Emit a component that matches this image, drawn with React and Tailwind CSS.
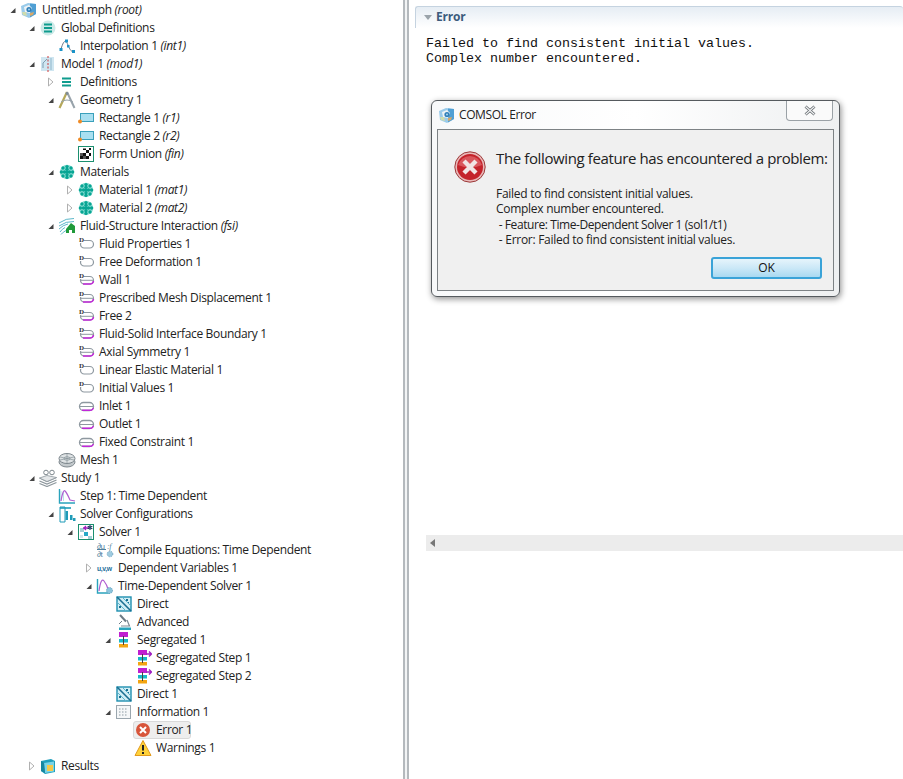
import React from "react";

const Svg = ({ children, w = 18, h = 18 }) => (
  <svg width={w} height={h} viewBox={`0 0 ${w} ${h}`} className="block shrink-0">{children}</svg>
);

const Logo = () => (
  <Svg>
    <path d="M1 5 L8 2 L16 3 L16 13 L9 17 L2 14 Z" fill="#9acbea" />
    <path d="M10 2.5 L16 3 L16 13 L10 16.5 Z" fill="#4f9fd4" />
    <path d="M4 6 L9 4 L12 7 L10 12 L5 11 Z" fill="#eef3f6" />
    <circle cx="9" cy="8.5" r="2.6" fill="#2f7fb8" />
    <circle cx="9" cy="8.5" r="1" fill="#a9d4ee" />
    <path d="M2 11 L6 11 L7 15 L3 14 Z" fill="#cfdcae" />
    <path d="M10 12 L14 11 L13 14 L10 15 Z" fill="#d8a868" />
  </Svg>
);
const GlobalDefs = () => (
  <Svg>
    <circle cx="9" cy="9" r="7.5" fill="#cdeae8" />
    <path d="M5 5.5H13M5 9H13M5 12.5H13" stroke="#0f9c8e" strokeWidth="2" />
  </Svg>
);
const Interp = () => (
  <Svg>
    <path d="M3 12 C6 2, 8 3, 10 8 S13 14, 15 15" fill="none" stroke="#6a7a88" strokeWidth="1" />
    <rect x="1.5" y="11" width="3" height="3" fill="#1a93c8" />
    <rect x="7" y="2.5" width="3" height="3" fill="#1a93c8" />
    <rect x="9" y="8" width="2.5" height="2.5" fill="#1a93c8" />
    <rect x="14" y="13" width="3" height="3" fill="#1a93c8" />
  </Svg>
);
const ModelIc = () => (
  <Svg>
    <rect x="2" y="2" width="13" height="14" fill="#cfe6f1" />
    <path d="M4 13 L4 8 L8 4" fill="none" stroke="#7f9fb2" />
    <path d="M9 1V17" stroke="#cc3a3a" strokeWidth="1" strokeDasharray="2 1.5" />
    <path d="M12 3V15" stroke="#8fb6cb" />
  </Svg>
);
const Lines = () => (
  <Svg>
    <path d="M4 5.5H13M4 9H13M4 12.5H13" stroke="#0f9c8e" strokeWidth="2" />
  </Svg>
);
const Compass = () => (
  <Svg>
    <path d="M9 1 L1.5 17" stroke="#b5a85a" strokeWidth="2.2" />
    <path d="M9 1 L16.5 17" stroke="#98a3ab" strokeWidth="2" />
    <path d="M3 11 Q9 7 15 11" stroke="#98a3ab" fill="none" />
    <circle cx="9" cy="2.5" r="1.4" fill="#7f8c96" />
  </Svg>
);
const Rect = () => (
  <Svg>
    <rect x="3.5" y="4.5" width="13" height="8" fill="#a9dff0" stroke="#3aa0bb" />
    <circle cx="3" cy="12.5" r="2" fill="#f08a24" />
  </Svg>
);
const Checker = () => (
  <Svg>
    <rect x="1.5" y="1.5" width="15" height="15" fill="#fff" stroke="#1b8f6f" />
    <path d="M3 11h3v3H3zM6 8h3v3H6zM9 5h3v3H9zM12 3h2v2h-2zM9 11h3v3H9zM12 8h2v3h-2zM6 3.5h3V5H6z" fill="#111" />
    <path d="M3 8h3v3H3zM6 11h3v3H6z" fill="#555" />
  </Svg>
);
const Material = () => (
  <Svg>
    <circle cx="9" cy="9" r="7.2" fill="#8fe0d6" />
    {[[9,3.6],[5,5],[13,5],[3.4,9],[14.6,9],[5,13],[13,13],[9,14.4],[9,9],[6.5,9],[11.5,9],[9,6.3],[9,11.7]].map(([x, y], i) => (
      <circle key={i} cx={x} cy={y} r="1.7" fill="#08a594" />
    ))}
  </Svg>
);
const Fsi = () => (
  <Svg>
    <path d="M1 6 Q8 1 16 1.5M1 9 Q8 4 16 4.5M1 12 Q5 8 10 7M2 15 Q4 12 7 10.5M3 17.5 Q5 15 8 13.5" stroke="#5cb8c9" fill="none" />
    <path d="M8 16 L8 12 L13 6 L17 9 L17 16 L14 16 L14 13 L11 13 L11 16 Z" fill="#1f9a3a" />
  </Svg>
);
const DNode = ({ m }) => (
  <Svg>
    <rect x="3.5" y="5.5" width="13" height="7.5" rx="3.7" fill="#fff" stroke="#8e98a0" strokeWidth="1.2" />
    {m ? (
      <>
        <path d="M4 9.3H16" stroke="#8e98a0" />
        <path d="M6 13H13.5A3.5 3.5 0 0 0 16.5 10" fill="none" stroke="#c028d8" strokeWidth="1.5" />
      </>
    ) : null}
    <rect x="1" y="1" width="6" height="7" fill="#fff" />
    <text x="2" y="7" fontSize="7" fontWeight="700" fontFamily="Liberation Serif, serif" fill="#333">D</text>
  </Svg>
);
const Pill = () => (
  <Svg>
    <rect x="2.5" y="5.5" width="14" height="8" rx="4" fill="#fff" stroke="#8e98a0" strokeWidth="1.3" />
    <path d="M3 9.5H16" stroke="#8e98a0" />
    <path d="M5 13.3H14A3.5 3.5 0 0 0 16.4 11" fill="none" stroke="#c028d8" strokeWidth="1.4" />
  </Svg>
);
const Mesh = () => (
  <Svg>
    <ellipse cx="9" cy="11" rx="8" ry="5" fill="#c3c9cc" stroke="#7d878d" />
    <ellipse cx="9" cy="7.5" rx="8" ry="5" fill="#dfe3e5" stroke="#7d878d" />
    <path d="M9 3V12M2 6L16 9M2 9L16 6" stroke="#87939a" strokeWidth="0.7" />
    <ellipse cx="9" cy="7.5" rx="3" ry="1.8" fill="none" stroke="#87939a" strokeWidth="0.7" />
  </Svg>
);
const Study = () => (
  <Svg>
    <circle cx="7" cy="3.5" r="2.3" fill="none" stroke="#7d878d" />
    <circle cx="13" cy="3.5" r="2.3" fill="none" stroke="#7d878d" />
    <path d="M0.5 9 L8 12.5 L17.5 8.5 M0.5 12 L8 15 L17.5 11 M0.5 14.5 L8 17.5 L17.5 13.5" fill="none" stroke="#8d979d" strokeWidth="1.2" />
    <path d="M0.5 9 L8 6.5 L17.5 8.5 L8 12.5Z" fill="#e4e7e9" stroke="#8d979d" strokeWidth="0.8" />
  </Svg>
);
const Step = () => (
  <Svg>
    <path d="M1.5 2V16H17" fill="none" stroke="#2aa3bc" strokeWidth="1.4" />
    <path d="M3 4 L3 14 M5.5 4V14" stroke="#a8d8e6" strokeWidth="0.8" />
    <path d="M3 14 Q5 2 7 4 T12 13 L17 14" fill="none" stroke="#b05fd0" strokeWidth="1.2" />
  </Svg>
);
const SolverCfg = () => (
  <Svg>
    <path d="M2 2H7V17H2Z" fill="#fff" stroke="#1f9bb8" />
    <path d="M2 3H13" stroke="#1f9bb8" strokeWidth="1.6" />
    <rect x="7.5" y="6" width="2.5" height="9" fill="#1f9bb8" />
    <rect x="12" y="10" width="2.5" height="5" fill="#1f9bb8" />
    <rect x="15" y="13" width="2.5" height="3" fill="#1f9bb8" />
  </Svg>
);
const Solver = () => (
  <Svg>
    <rect x="1.5" y="1.5" width="15" height="15" fill="#fff" stroke="#1b8f6f" />
    <rect x="3" y="5" width="4" height="4" fill="#a7cfd6" />
    <rect x="7" y="9" width="4" height="4" fill="#27a9c8" />
    <rect x="11" y="13" width="4" height="3" fill="#a7cfd6" />
    <rect x="3" y="12" width="3" height="3" fill="#d4e6ea" />
    <path d="M6 5H12M9 3L7 5L9 7" stroke="#a020c0" fill="none" strokeWidth="1.3" />
    <path d="M13 2V7M10.7 3.2L15.3 5.8M15.3 3.2L10.7 5.8" stroke="#14305a" strokeWidth="1.1" />
  </Svg>
);
const Compile = () => (
  <svg width="18" height="18" viewBox="0 0 18 18" className="block shrink-0">
    <text x="1" y="7.5" fontSize="8" fontFamily="Liberation Sans, sans-serif" fill="#4f7f9c">∂u</text>
    <path d="M1 8.5H10" stroke="#4f7f9c" />
    <text x="1" y="15.5" fontSize="8" fontFamily="Liberation Sans, sans-serif" fill="#4f7f9c">∂t</text>
    <text x="11" y="8" fontSize="8" fontStyle="italic" fontFamily="Liberation Serif, serif" fill="#4f7f9c">:f</text>
    <circle cx="14" cy="13" r="2.8" fill="#9fcbe0" stroke="#6aa0bd" strokeDasharray="1 1" />
  </svg>
);
const Uvw = () => (
  <svg width="18" height="18" viewBox="0 0 18 18" className="block shrink-0 overflow-visible">
    <text x="1" y="12" fontSize="6.8" fontWeight="700" fontFamily="Liberation Sans, sans-serif" fill="#1b6f9c">u,v,w</text>
  </svg>
);
const TimeSolver = () => (
  <Svg>
    <path d="M1.5 2V16H14" fill="none" stroke="#2aa3bc" strokeWidth="1.4" />
    <path d="M3 14 Q5 0 8 4 T12 12" fill="none" stroke="#b05fd0" strokeWidth="1.2" />
    <circle cx="13.5" cy="13.5" r="3" fill="#8cc4dc" stroke="#5f9dbb" strokeDasharray="1 1" />
  </Svg>
);
const Direct = () => (
  <Svg>
    <rect x="2" y="2" width="14" height="14" fill="#d2eef5" stroke="#1f8fb0" strokeWidth="1.4" />
    <path d="M2 2L16 16" stroke="#1a6f92" strokeWidth="1.6" />
    <path d="M2 7L11 16M7 2L16 11" stroke="#5cb4cd" strokeWidth="1" />
    <path d="M11 4h2v2h-2zM4 11h2v2H4zM13 7h1v1h-1z" fill="#1a6f92" />
  </Svg>
);
const Advanced = () => (
  <Svg>
    <path d="M5 2L11 8.5" stroke="#6d7a84" strokeWidth="2" />
    <path d="M7 8 L4 11" stroke="#6d7a84" />
    <path d="M12 7 L14.5 13H6" fill="none" stroke="#7d8a94" strokeWidth="1.2" />
    <rect x="4" y="14.5" width="12" height="2.5" fill="#2aa3bc" />
  </Svg>
);
const Segregated = () => (
  <Svg>
    <rect x="4" y="1" width="9" height="5" fill="#c01fd0" />
    <rect x="4" y="8" width="9" height="3.5" fill="#17b8c8" />
    <rect x="4" y="13" width="9" height="3.5" fill="#f3a512" />
    <path d="M8.5 5V14" stroke="#444" strokeWidth="1" />
  </Svg>
);
const SegStep = () => (
  <Svg>
    <rect x="4" y="1" width="9" height="5" fill="#c01fd0" />
    <rect x="4" y="8" width="9" height="3.5" fill="#17b8c8" />
    <rect x="4" y="13" width="9" height="3.5" fill="#f3a512" />
    <path d="M8.5 5V14" stroke="#444" />
    <path d="M12 5H17M15 2.5L17.5 5L15 7.5" stroke="#a020c0" fill="none" strokeWidth="1.4" />
  </Svg>
);
const Info = () => (
  <Svg>
    <rect x="1.5" y="2.5" width="14" height="13" fill="#f5f7f8" stroke="#9aa6ae" />
    <path d="M4 6H13M4 9H13M4 12H13" stroke="#8d9aa3" strokeWidth="1" strokeDasharray="1.5 1.5" />
  </Svg>
);
const ErrIc = ({ s = 16 }) => (
  <svg width={s} height={s} viewBox="0 0 16 16" className="block shrink-0">
    <circle cx="8" cy="8" r="7" fill="#d8553a" />
    <path d="M5 5L11 11M11 5L5 11" stroke="#fff" strokeWidth="2" />
  </svg>
);
const Warn = () => (
  <Svg>
    <path d="M9 1.5L17 16.5H1Z" fill="#ffd23a" stroke="#e39a1c" strokeLinejoin="round" />
    <path d="M9 6V11.5" stroke="#222" strokeWidth="2" />
    <rect x="8" y="13" width="2" height="2" fill="#222" />
  </Svg>
);
const Results = () => (
  <Svg>
    <path d="M2 4 L12 2 L16 4 L16 15 L6 17 L2 14 Z" fill="#1e9fbc" />
    <path d="M5 6 L15 4.5 V14.5 L6 16 Z" fill="#7ad3e6" />
    <path d="M8 8H14V14H8Z" fill="#f5c84a" />
    <path d="M2 4 L5 6 L6 16 L2 14Z" fill="#17869f" />
  </Svg>
);

const Arrow = ({ t }) => {
  if (t === "open")
    return (
      <svg width="8" height="8" viewBox="0 0 8 8" className="block"><path d="M6.5 2V7H1.5Z" fill="#444444" /></svg>
    );
  if (t === "closed")
    return (
      <svg width="8" height="10" viewBox="0 0 8 10" className="block"><path d="M1.5 1L6 5L1.5 9Z" fill="#fff" stroke="#b0b0b0" /></svg>
    );
  return null;
};

const rows = [
  [0, "open", Logo, "Untitled.mph", "(root)"],
  [1, "open", GlobalDefs, "Global Definitions"],
  [2, "", Interp, "Interpolation 1", "(int1)"],
  [1, "open", ModelIc, "Model 1", "(mod1)"],
  [2, "closed", Lines, "Definitions"],
  [2, "open", Compass, "Geometry 1"],
  [3, "", Rect, "Rectangle 1", "(r1)"],
  [3, "", Rect, "Rectangle 2", "(r2)"],
  [3, "", Checker, "Form Union", "(fin)"],
  [2, "open", Material, "Materials"],
  [3, "closed", Material, "Material 1", "(mat1)"],
  [3, "closed", Material, "Material 2", "(mat2)"],
  [2, "open", Fsi, "Fluid-Structure Interaction", "(fsi)"],
  [3, "", () => <DNode />, "Fluid Properties 1"],
  [3, "", () => <DNode />, "Free Deformation 1"],
  [3, "", () => <DNode m />, "Wall 1"],
  [3, "", () => <DNode m />, "Prescribed Mesh Displacement 1"],
  [3, "", () => <DNode m />, "Free 2"],
  [3, "", () => <DNode m />, "Fluid-Solid Interface Boundary 1"],
  [3, "", () => <DNode m />, "Axial Symmetry 1"],
  [3, "", () => <DNode />, "Linear Elastic Material 1"],
  [3, "", () => <DNode />, "Initial Values 1"],
  [3, "", Pill, "Inlet 1"],
  [3, "", Pill, "Outlet 1"],
  [3, "", Pill, "Fixed Constraint 1"],
  [2, "", Mesh, "Mesh 1"],
  [1, "open", Study, "Study 1"],
  [2, "", Step, "Step 1: Time Dependent"],
  [2, "open", SolverCfg, "Solver Configurations"],
  [3, "open", Solver, "Solver 1"],
  [4, "", Compile, "Compile Equations: Time Dependent"],
  [4, "closed", Uvw, "Dependent Variables 1"],
  [4, "open", TimeSolver, "Time-Dependent Solver 1"],
  [5, "", Direct, "Direct"],
  [5, "", Advanced, "Advanced"],
  [5, "open", Segregated, "Segregated 1"],
  [6, "", SegStep, "Segregated Step 1"],
  [6, "", SegStep, "Segregated Step 2"],
  [5, "", Direct, "Direct 1"],
  [5, "open", Info, "Information 1"],
  [6, "", () => <div className="flex w-[18px] justify-center"><ErrIc /></div>, "Error 1", null, true],
  [6, "", Warn, "Warnings 1"],
  [1, "closed", Results, "Results"],
];

const depthPad = [
  "pl-[6px]", "pl-[25px]", "pl-[44px]", "pl-[63px]", "pl-[82px]", "pl-[101px]", "pl-[120px]",
];

function Row({ d, a, I, label, em, sel }) {
  return (
    <div className={`relative flex h-[18px] items-center ${depthPad[d]}`}>
      {sel ? (
        <div className="absolute left-[133px] top-0 h-[18px] w-[58px] rounded-[3px] border border-[#d9d9d9] bg-[#eeeeee]" />
      ) : null}
      <div className="relative flex w-[14px] shrink-0 items-center justify-center"><Arrow t={a} /></div>
      <div className="relative mr-[4px] flex h-[18px] w-[18px] shrink-0 items-center"><I /></div>
      <span className="relative whitespace-nowrap">
        {label}
        {em ? <span className="italic"> {em}</span> : null}
      </span>
    </div>
  );
}

export default function App() {
  return (
    <div
      className="flex h-[779px] w-[903px] overflow-hidden bg-white text-[12px] leading-[18px] text-[#222222]"
      style={{ fontFamily: '"Open Sans", "Noto Sans", sans-serif' }}
    >
      <div className="w-[403px] shrink-0 pt-px tracking-[-0.34px]">
        {rows.map((r, i) => (
          <Row key={i} d={r[0]} a={r[1]} I={r[2]} label={r[3]} em={r[4]} sel={r[5]} />
        ))}
      </div>

      <div className="flex w-[6px] shrink-0 border-x-2 border-x-[#b4b9bd] bg-[#f2f4f5]" />

      <div className="relative min-w-0 flex-1 pl-[6px] pt-[6px]">
        <div className="flex h-[22px] items-center rounded-t-[3px] border-t border-l border-[#c5d3e0] bg-gradient-to-b from-[#e6edf4] to-white pb-px pl-[8px]">
          <svg width="8" height="5" viewBox="0 0 8 5"><path d="M0 0H8L4 5Z" fill="#9aa3aa" /></svg>
          <span className="ml-[4px] font-bold tracking-[-0.2px] text-[#3c5b7c]">Error</span>
        </div>
        <div
          className="mt-[8px] pl-[11px] text-[13.33px] leading-[15px] text-[#111111]"
          style={{ fontFamily: '"Liberation Mono", monospace' }}
        >
          <div>Failed to find consistent initial values.</div>
          <div>Complex number encountered.</div>
        </div>
        <div className="ml-[11px] mt-[469px] flex h-[16px] items-center bg-[#ececec] pl-[4px]">
          <svg width="6" height="8" viewBox="0 0 6 8"><path d="M5 0V8L0 4Z" fill="#777777" /></svg>
        </div>

        <div className="absolute left-[22px] top-[100px] flex h-[197px] w-[409px] flex-col rounded-[6px] border border-[#555a5e] bg-gradient-to-r from-[#f8f9fa] via-white to-[#eef0f1] px-[5px] pb-[5px] shadow-[1px_2px_6px_rgba(0,0,0,0.45)]">
          <div className="relative flex h-[28px] shrink-0 items-center">
            <div className="ml-[1px] mr-[3px]"><Logo /></div>
            <span className="text-[12px] tracking-[-0.4px] text-[#222222]">COMSOL Error</span>
            <div className="absolute right-[1px] top-0 flex h-[20px] w-[47px] items-center justify-center rounded-b-[4px] border border-t-0 border-[#9aa1a6] bg-[#fafafa]">
              <svg width="12" height="11" viewBox="0 0 12 11">
                <path d="M1.5 1.5L10.5 9.5M10.5 1.5L1.5 9.5" stroke="#5f6569" strokeWidth="2.8" />
                <path d="M1.5 1.5L10.5 9.5M10.5 1.5L1.5 9.5" stroke="#f2f3f4" strokeWidth="1.2" />
              </svg>
            </div>
          </div>
          <div className="flex min-h-0 flex-1 flex-col border border-[#7d8285] bg-[#f0f0f0] pl-[16px] pr-[4px]">
            <div className="flex flex-1">
              <div className="mr-[10px] mt-[21px] shrink-0">
                <svg width="32" height="32" viewBox="0 0 32 32" className="block">
                  <circle cx="16" cy="16" r="15.2" fill="#e9b9b9" stroke="#9c3a3a" strokeWidth="1" />
                  <circle cx="16" cy="16" r="13" fill="#c4232b" />
                  <path d="M4 14A12.5 12.5 0 0 1 28 14Q16 19 4 14Z" fill="#d9565c" />
                  <path d="M10 10L22 22M22 10L10 22" stroke="#f1e4e4" strokeWidth="4.4" />
                </svg>
              </div>
              <div className="min-w-0 flex-1">
                <div className="mt-[17px] h-[22px] whitespace-nowrap text-[15px] leading-[22px] tracking-[-0.38px] text-[#222222]">
                  The following feature has encountered a problem:
                </div>
                <div className="mt-[17px] text-[12px] leading-[15.4px] tracking-[-0.28px] text-[#222222]">
                  <div>Failed to find consistent initial values.</div>
                  <div>Complex number encountered.</div>
                  <div className="tracking-[-0.42px]">&nbsp;- Feature: Time-Dependent Solver 1 (sol1/t1)</div>
                  <div>&nbsp;- Error: Failed to find consistent initial values.</div>
                </div>
              </div>
            </div>
            <div className="flex h-[33px] shrink-0 justify-end pr-[7px]">
              <div className="flex h-[22px] w-[111px] items-center justify-center rounded-[3px] border-2 border-[#3aa3d8] bg-gradient-to-b from-[#e6f4fb] via-[#cbe8f7] to-[#a9d9f1] text-[12px] text-[#111111]">
                OK
              </div>
            </div>
          </div>
        </div>
      </div>
    </div>
  );
}
